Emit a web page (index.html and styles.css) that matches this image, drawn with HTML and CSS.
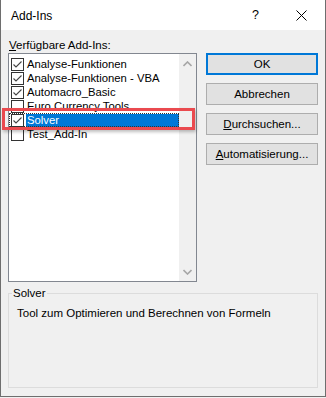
FILE: index.html
```html
<!DOCTYPE html>
<html lang="de">
<head>
<meta charset="utf-8">
<title>Add-Ins</title>
<link rel="stylesheet" href="styles.css">
</head>
<body>
<div class="window">
  <div class="titlebar">
    <span class="title">Add-Ins</span>
    <span class="help">?</span>
    <span class="close"><svg width="11" height="11" viewBox="0 0 11 11"><path d="M0.5 0.5 L10.5 10.5 M10.5 0.5 L0.5 10.5" stroke="#000" stroke-width="1" fill="none"/></svg></span>
  </div>
  <div class="content">
    <div class="caption"><u>V</u>erfügbare Add-Ins:</div>
    <div class="main">
      <div class="listbox">
        <div class="items">
          <div class="item"><span class="cb checked"><svg width="11" height="11" viewBox="0 0 11 11"><path d="M1.5 5.5 L4 8 L9.5 2.5" stroke="#444" stroke-width="1.1" fill="none"/></svg></span><span class="label">Analyse-Funktionen</span></div>
          <div class="item"><span class="cb checked"><svg width="11" height="11" viewBox="0 0 11 11"><path d="M1.5 5.5 L4 8 L9.5 2.5" stroke="#444" stroke-width="1.1" fill="none"/></svg></span><span class="label">Analyse-Funktionen - VBA</span></div>
          <div class="item"><span class="cb checked"><svg width="11" height="11" viewBox="0 0 11 11"><path d="M1.5 5.5 L4 8 L9.5 2.5" stroke="#444" stroke-width="1.1" fill="none"/></svg></span><span class="label">Automacro_Basic</span></div>
          <div class="item"><span class="cb"></span><span class="label">Euro Currency Tools</span></div>
          <div class="item selected"><span class="cb checked"><svg width="11" height="11" viewBox="0 0 11 11"><path d="M1.5 5.5 L4 8 L9.5 2.5" stroke="#444" stroke-width="1.1" fill="none"/></svg></span><span class="label">Solver</span></div>
          <div class="item"><span class="cb"></span><span class="label">Test_Add-In</span></div>
        </div>
        <div class="scrollbar">
          <svg class="arrow" width="9" height="6" viewBox="0 0 9 6"><path d="M0.5 5 L4.5 1 L8.5 5" stroke="#a6a6a6" stroke-width="1.6" fill="none"/></svg>
          <svg class="arrow" width="9" height="6" viewBox="0 0 9 6"><path d="M0.5 1 L4.5 5 L8.5 1" stroke="#a6a6a6" stroke-width="1.6" fill="none"/></svg>
        </div>
      </div>
      <div class="buttons">
        <div class="btn default">OK</div>
        <div class="btn">Abbrechen</div>
        <div class="btn"><u>D</u>urchsuchen...</div>
        <div class="btn"><u>A</u>utomatisierung...</div>
      </div>
    </div>
    <fieldset class="group">
      <legend>Solver</legend>
      <p class="desc">Tool zum Optimieren und Berechnen von Formeln</p>
    </fieldset>
  </div>
  <div class="marker"></div>
</div>
</body>
</html>
```
FILE: styles.css
```css
html, body {
  margin: 0;
  padding: 0;
  background: #f0f0f0;
}
body {
  font-family: "Liberation Sans", Arial, sans-serif;
  font-size: 11.5px;
  color: #000;
}
.window {
  position: relative;
  width: 326px;
  height: 397px;
  box-sizing: border-box;
  border-left: 1px solid #6e6e6e;
  border-right: 1px solid #6e6e6e;
  border-bottom: 1px solid #6e6e6e;
  background: #f0f0f0;
  display: flex;
  flex-direction: column;
}
.titlebar {
  height: 30px;
  background: #fff;
  display: flex;
  align-items: center;
  padding-left: 10px;
  font-size: 12px;
}
.title {
  flex: 1;
  margin-top: 1px;
}
.help {
  font-size: 12.5px;
  width: 12px;
  margin-right: 32px;
}
.close {
  width: 11px;
  height: 11px;
  margin-right: 18px;
  display: flex;
}
.content {
  flex: 1;
  padding: 8px 7px 8px 7px;
  display: flex;
  flex-direction: column;
}
.caption {
  line-height: 14px;
  height: 14px;
  padding-left: 1px;
}
.main {
  margin-top: 1px;
  display: flex;
  gap: 9px;
}
.listbox {
  width: 189px;
  height: 229px;
  box-sizing: border-box;
  border: 1px solid #828790;
  background: #fff;
  display: flex;
}
.items {
  flex: 1;
  padding-top: 3px;
  font-size: 11.3px;
}
.item {
  height: 14px;
  display: flex;
  align-items: center;
  padding-left: 2px;
  box-sizing: border-box;
}
.cb {
  width: 13px;
  height: 13px;
  box-sizing: border-box;
  border: 1px solid #333;
  background: #fff;
  margin-right: 2px;
  display: flex;
  align-items: center;
  justify-content: center;
  flex: none;
}
.label {
  flex: 1;
  padding-left: 1px;
  line-height: 13px;
  height: 13px;
  white-space: nowrap;
}
.item.selected {
  outline: 1px dotted #333;
  outline-offset: -1px;
}
.item.selected .label {
  background: #0078d7;
  color: #fff;
}
.scrollbar {
  width: 17px;
  background: #f0f0f0;
  display: flex;
  flex-direction: column;
  justify-content: space-between;
  align-items: center;
  padding: 7px 0 6px;
  box-sizing: border-box;
}
.buttons {
  width: 112px;
  display: flex;
  flex-direction: column;
  gap: 8px;
}
.btn {
  height: 22px;
  box-sizing: border-box;
  border: 1px solid #adadad;
  background: #e1e1e1;
  display: flex;
  align-items: center;
  justify-content: center;
}
.btn.default {
  border: 2px solid #0078d7;
}
.group {
  margin: 4px 0 0 0;
  padding: 0 0 0 3px;
  border: 1px solid #dcdcdc;
  height: 102px;
  box-sizing: border-box;
  min-width: 0;
}
.group legend {
  padding: 0 1px;
  line-height: 14px;
}
.desc {
  margin: 6px 0 0 5px;
  line-height: 14px;
}
.marker {
  position: absolute;
  left: 1px;
  top: 108px;
  width: 193px;
  height: 22px;
  box-sizing: border-box;
  border: 3px solid #ea4a4f;
  box-shadow: 1px 2px 3px rgba(0,0,0,0.25);
}
```
